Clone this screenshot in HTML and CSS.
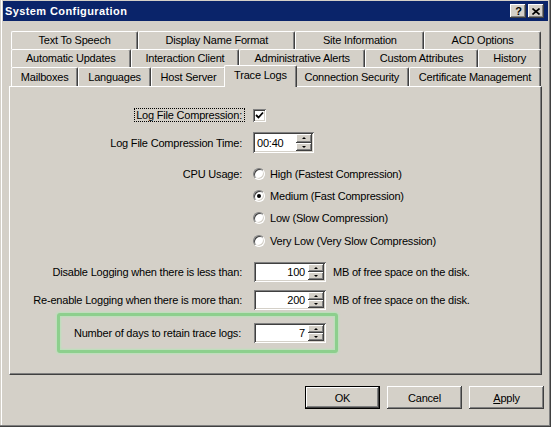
FILE: index.html
```html
<!DOCTYPE html>
<html>
<head>
<meta charset="utf-8">
<title>System Configuration</title>
<link rel="stylesheet" href="styles.css">
</head>
<body>
<div class="window">
  <div class="titlebar">
    <span class="title">System Configuration</span>
    <div class="tbtns">
      <span class="tbtn help">?</span>
      <span class="tbtn close"><svg width="8" height="7" viewBox="0 0 8 7"><path d="M0.5 0.5 L7.5 6.5 M7.5 0.5 L0.5 6.5" stroke="#000" stroke-width="1.6" fill="none"/></svg></span>
    </div>
  </div>

  <div class="tabs">
    <div class="tabrow">
      <div class="tab">Text To Speech</div>
      <div class="tab">Display Name Format</div>
      <div class="tab">Site Information</div>
      <div class="tab">ACD Options</div>
    </div>
    <div class="tabrow">
      <div class="tab">Automatic Updates</div>
      <div class="tab">Interaction Client</div>
      <div class="tab">Administrative Alerts</div>
      <div class="tab">Custom Attributes</div>
      <div class="tab">History</div>
    </div>
    <div class="tabrow front">
      <div class="tab">Mailboxes</div>
      <div class="tab">Languages</div>
      <div class="tab">Host Server</div>
      <div class="tab selected">Trace Logs</div>
      <div class="tab">Connection Security</div>
      <div class="tab">Certificate Management</div>
    </div>
  </div>

  <div class="panel">
    <div class="row r-check">
      <div class="lbl"><span class="focus">Log File Compression:</span></div>
      <div class="ctrl"><span class="checkbox"><svg width="9" height="9" viewBox="0 0 9 9"><polyline points="1,4 3.5,6.5 8,1.5" stroke="#000" stroke-width="1.8" fill="none"/></svg></span></div>
    </div>
    <div class="row r-time">
      <div class="lbl">Log File Compression Time:</div>
      <div class="ctrl">
        <div class="spin time"><span class="val">00:40</span><span class="arrows"><span class="arr"><i class="up"></i></span><span class="arr"><i class="down"></i></span></span></div>
      </div>
    </div>
    <div class="row r-radio first">
      <div class="lbl">CPU Usage:</div>
      <div class="ctrl radio-line"><span class="radio"></span><span>High (Fastest Compression)</span></div>
    </div>
    <div class="row r-radio">
      <div class="lbl"></div>
      <div class="ctrl radio-line"><span class="radio on"></span><span>Medium (Fast Compression)</span></div>
    </div>
    <div class="row r-radio">
      <div class="lbl"></div>
      <div class="ctrl radio-line"><span class="radio"></span><span>Low (Slow Compression)</span></div>
    </div>
    <div class="row r-radio last">
      <div class="lbl"></div>
      <div class="ctrl radio-line"><span class="radio"></span><span>Very Low (Very Slow Compression)</span></div>
    </div>
    <div class="row r-num first">
      <div class="lbl">Disable Logging when there is less than:</div>
      <div class="ctrl">
        <div class="spin"><span class="val num">100</span><span class="arrows"><span class="arr"><i class="up"></i></span><span class="arr"><i class="down"></i></span></span></div>
        <span class="unit">MB of free space on the disk.</span>
      </div>
    </div>
    <div class="row r-num">
      <div class="lbl">Re-enable Logging when there is more than:</div>
      <div class="ctrl">
        <div class="spin"><span class="val num">200</span><span class="arrows"><span class="arr"><i class="up"></i></span><span class="arr"><i class="down"></i></span></span></div>
        <span class="unit">MB of free space on the disk.</span>
      </div>
    </div>
    <div class="highlight">
      <div class="row r-days">
        <div class="lbl">Number of days to retain trace logs:</div>
        <div class="ctrl">
          <div class="spin"><span class="val num">7</span><span class="arrows"><span class="arr"><i class="up"></i></span><span class="arr"><i class="down"></i></span></span></div>
        </div>
      </div>
    </div>
  </div>

  <div class="buttons">
    <div class="btn default">OK</div>
    <div class="btn">Cancel</div>
    <div class="btn"><u>A</u>pply</div>
  </div>
</div>
</body>
</html>
```

FILE: styles.css
```css
html, body {
  margin: 0;
  padding: 0;
  background: #d4d0c8;
}

.window {
  width: 551px;
  height: 427px;
  box-sizing: border-box;
  padding: 1px 3px 3px 3px;
  background: #d4d0c8;
  box-shadow: inset -1px -1px #404040, inset -2px -2px #808080, inset 1px 0 #d4d0c8, inset 2px 0 #ffffff;
  font-family: "Liberation Sans", Arial, sans-serif;
  font-size: 11px;
  letter-spacing: -0.2px;
  color: #000;
  overflow: hidden;
}

.titlebar {
  height: 20px;
  background: #0a246a;
  display: flex;
  align-items: center;
  justify-content: space-between;
  padding: 0 4px 0 2px;
}

.title {
  color: #fff;
  font-weight: bold;
  font-size: 11px;
  letter-spacing: 0.4px;
}

.tbtns {
  display: flex;
  gap: 2px;
}

.tbtn {
  width: 16px;
  height: 14px;
  box-sizing: border-box;
  background: #d4d0c8;
  box-shadow: inset -1px -1px #404040, inset 1px 1px #ffffff, inset -2px -2px #808080;
  display: flex;
  align-items: center;
  justify-content: center;
  font-weight: bold;
  font-size: 11px;
  line-height: 1;
  letter-spacing: 0;
}

.tbtn.help {
  padding-left: 1px;
}

/* Tabs */
.tabs {
  margin: 10px 6px 0 6px;
}

.tabrow {
  display: flex;
  height: 18px;
  margin: 0 1px 0 2px;
}

.tabrow.front {
  height: 19px;
}

.tab {
  flex: 1 1 auto;
  box-sizing: border-box;
  border-top: 1px solid #fff;
  border-left: 1px solid #fff;
  border-right: 1px solid #404040;
  border-radius: 2px 2px 0 0;
  box-shadow: inset -1px 0 #808080;
  background: #d4d0c8;
  display: flex;
  align-items: center;
  justify-content: center;
  white-space: nowrap;
  padding: 0 6px 1px 6px;
}

.tab.selected {
  position: relative;
  z-index: 2;
  margin: -2px -2px -1px -2px;
  padding-bottom: 3px;
}

/* Panel */
.panel {
  height: 289px;
  box-sizing: border-box;
  margin: 0 6px 0 6px;
  border-top: 1px solid #fff;
  border-left: 1px solid #fff;
  border-right: 1px solid #404040;
  border-bottom: 1px solid #404040;
  box-shadow: inset -1px -1px #808080;
  padding: 17px 0 0 0;
  display: flex;
  flex-direction: column;
}

.row {
  display: flex;
  align-items: center;
  flex: none;
}

.lbl {
  width: 232px;
  text-align: right;
  white-space: nowrap;
  flex: none;
}

.ctrl {
  margin-left: 12px;
  display: flex;
  align-items: center;
  white-space: nowrap;
}

.r-check { height: 22px; }
.r-check .ctrl { margin-left: 11px; }
.focus {
  border: 1px dotted #000;
  padding: 0 2px 0 1px;
  margin-right: -3px;
}

.checkbox {
  width: 13px;
  height: 13px;
  box-sizing: border-box;
  background: #fff;
  box-shadow: inset 1px 1px #808080, inset -1px -1px #fff, inset 2px 2px #404040, inset -2px -2px #d4d0c8;
  display: flex;
  align-items: center;
  justify-content: center;
}

.r-time { height: 21px; margin-top: 6px; }
.r-time .ctrl { margin-left: 11px; }

.r-radio { height: 22px; }
.r-radio.first { margin-top: 10px; }
.r-radio.last { margin-top: 1px; }
.r-radio .ctrl { margin-left: 11px; }

.radio-line { gap: 5px; }

.radio {
  width: 12px;
  height: 12px;
  box-sizing: border-box;
  border-radius: 50%;
  background: #fff;
  border: 1px solid;
  border-color: #808080 #ffffff #ffffff #808080;
  box-shadow: inset 1px 1px #404040, inset -1px -1px #d4d0c8;
  display: flex;
  align-items: center;
  justify-content: center;
}

.radio.on::after {
  content: "";
  width: 4px;
  height: 4px;
  border-radius: 50%;
  background: #000;
}

.r-num { height: 20px; margin-top: 8px; }
.r-num.first { margin-top: 10px; }

.spin {
  width: 72px;
  height: 20px;
  box-sizing: border-box;
  background: #fff;
  box-shadow: inset 1px 1px #808080, inset -1px -1px #fff, inset 2px 2px #404040, inset -2px -2px #d4d0c8;
  display: flex;
  padding: 2px;
}

.spin.time {
  width: 61px;
  height: 21px;
}

.val {
  flex: 1;
  display: flex;
  align-items: center;
  padding-left: 2px;
  font-size: 11px;
}

.val.num {
  justify-content: flex-end;
  padding-right: 3px;
}

.arrows {
  width: 16px;
  display: flex;
  flex-direction: column;
}

.arr {
  flex: 1;
  background: #d4d0c8;
  box-shadow: inset -1px -1px #404040, inset 1px 1px #ffffff, inset -2px -2px #808080;
  display: flex;
  align-items: center;
  justify-content: center;
}

.arr i {
  width: 0;
  height: 0;
  border-left: 2px solid transparent;
  border-right: 2px solid transparent;
}

.arr i.up { border-bottom: 2px solid #000; }
.arr i.down { border-top: 2px solid #000; }

.unit { margin-left: 7px; }

.highlight {
  margin: 3px 0 0 47px;
  width: 281px;
  height: 40px;
  box-sizing: border-box;
  border: 3px solid #8dcf8d;
  border-radius: 3px;
  box-shadow: 0 0 2px 1px #b9e2b9, inset 0 0 2px 1px #b9e2b9;
  display: flex;
  align-items: center;
}

.r-days { height: 20px; }
.r-days .lbl { width: 181px; }
.r-days .ctrl { margin-left: 13px; }

/* Buttons */
.buttons {
  display: flex;
  justify-content: flex-end;
  gap: 7px;
  margin: 11px 4px 0 0;
}

.btn {
  width: 75px;
  height: 23px;
  box-sizing: border-box;
  background: #d4d0c8;
  box-shadow: inset -1px -1px #404040, inset 1px 1px #ffffff, inset -2px -2px #808080;
  display: flex;
  align-items: center;
  justify-content: center;
}

.btn.default {
  box-shadow: inset 0 0 0 1px #000, inset -2px -2px #404040, inset 2px 2px #ffffff, inset -3px -3px #808080;
}
```
